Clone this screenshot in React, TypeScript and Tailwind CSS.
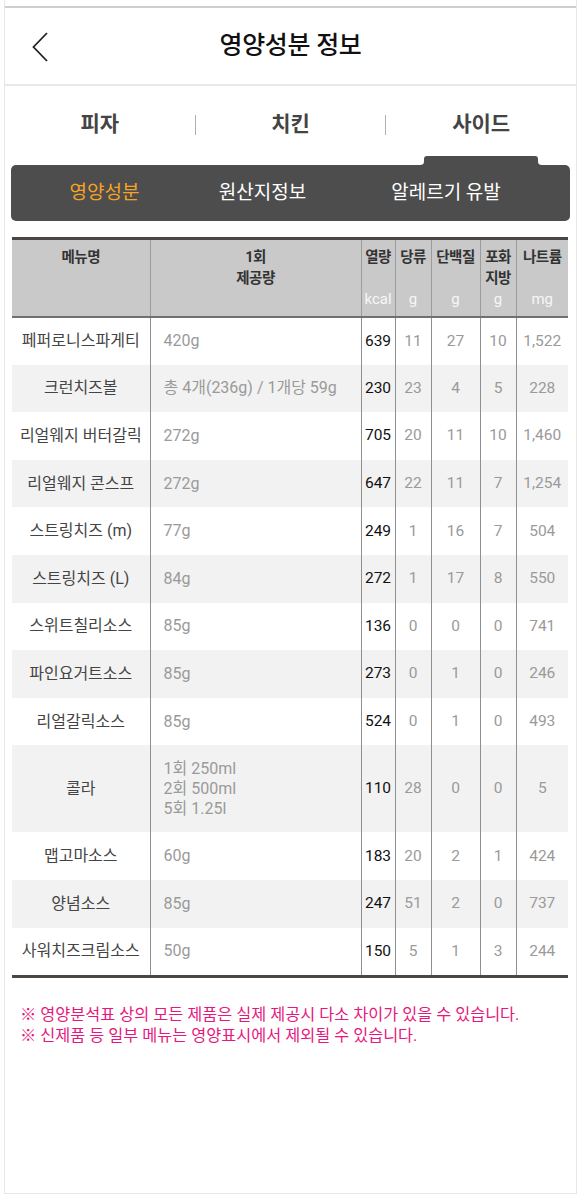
import React from 'react';

interface Row {
  name: string;
  serving: string[];
  kcal: string;
  sugar: string;
  protein: string;
  fat: string;
  sodium: string;
}

const rows: Row[] = [
  { name: '페퍼로니스파게티', serving: ['420g'], kcal: '639', sugar: '11', protein: '27', fat: '10', sodium: '1,522' },
  { name: '크런치즈볼', serving: ['총 4개(236g) / 1개당 59g'], kcal: '230', sugar: '23', protein: '4', fat: '5', sodium: '228' },
  { name: '리얼웨지 버터갈릭', serving: ['272g'], kcal: '705', sugar: '20', protein: '11', fat: '10', sodium: '1,460' },
  { name: '리얼웨지 콘스프', serving: ['272g'], kcal: '647', sugar: '22', protein: '11', fat: '7', sodium: '1,254' },
  { name: '스트링치즈 (m)', serving: ['77g'], kcal: '249', sugar: '1', protein: '16', fat: '7', sodium: '504' },
  { name: '스트링치즈 (L)', serving: ['84g'], kcal: '272', sugar: '1', protein: '17', fat: '8', sodium: '550' },
  { name: '스위트칠리소스', serving: ['85g'], kcal: '136', sugar: '0', protein: '0', fat: '0', sodium: '741' },
  { name: '파인요거트소스', serving: ['85g'], kcal: '273', sugar: '0', protein: '1', fat: '0', sodium: '246' },
  { name: '리얼갈릭소스', serving: ['85g'], kcal: '524', sugar: '0', protein: '1', fat: '0', sodium: '493' },
  { name: '콜라', serving: ['1회 250ml', '2회 500ml', '5회 1.25l'], kcal: '110', sugar: '28', protein: '0', fat: '0', sodium: '5' },
  { name: '맵고마소스', serving: ['60g'], kcal: '183', sugar: '20', protein: '2', fat: '1', sodium: '424' },
  { name: '양념소스', serving: ['85g'], kcal: '247', sugar: '51', protein: '2', fat: '0', sodium: '737' },
  { name: '사워치즈크림소스', serving: ['50g'], kcal: '150', sugar: '5', protein: '1', fat: '3', sodium: '244' },
];

const headers: { label: string[]; unit?: string }[] = [
  { label: ['메뉴명'] },
  { label: ['1회', '제공량'] },
  { label: ['열량'], unit: 'kcal' },
  { label: ['당류'], unit: 'g' },
  { label: ['단백질'], unit: 'g' },
  { label: ['포화', '지방'], unit: 'g' },
  { label: ['나트륨'], unit: 'mg' },
];

const BackIcon = () => (
  <svg width="16" height="30" viewBox="0 0 16 30" fill="none">
    <path d="M15 1 L1.5 15 L15 29" stroke="#222" strokeWidth="1.8" />
  </svg>
);

// little tab under the active category, flares into the dark bar
const TabNotch = () => (
  <svg width="124" height="9" viewBox="0 0 124 9" className="block">
    <path d="M0 9 C4 9 5 8 5 5 L5 3 Q5 0 8 0 L116 0 Q119 0 119 3 L119 5 C119 8 120 9 124 9 Z" fill="#4d4d4d" />
  </svg>
);

const cellBorder = 'border-r border-[#8f8f8f]';

export default function App() {
  return (
    <div className="w-[580px] min-h-[1196px] bg-white" style={{ fontFamily: "Roboto, 'Noto Sans CJK KR', sans-serif" }}>
      <div className="ml-[4px] w-[573px] h-[1194px] border-x border-b border-[#e6e6e6]">
        <div className="pt-[6px]">
          {/* header */}
          <div className="relative h-[80px] border-t-2 border-b-2 border-t-[#cfcfcf] border-b-[#e8e8e8] flex items-center justify-center">
            <button className="absolute left-[27px] top-[24px]">
              <BackIcon />
            </button>
            <h1 className="text-[25px] font-medium text-[#111] tracking-[-0.3px]">영양성분 정보</h1>
          </div>

          {/* category tabs */}
          <div className="flex items-start">
            <div className="flex-1 flex flex-col items-center">
              <div className="h-[70px] pt-2 flex items-center text-[21px] font-bold text-[#444]">피자</div>
              <div className="h-[9px]" />
            </div>
            <div className="w-px h-[20px] bg-[#b0b0b0] mt-[29px]" />
            <div className="flex-1 flex flex-col items-center">
              <div className="h-[70px] pt-2 flex items-center text-[21px] font-bold text-[#444]">치킨</div>
              <div className="h-[9px]" />
            </div>
            <div className="w-px h-[20px] bg-[#b0b0b0] mt-[29px]" />
            <div className="flex-1 flex flex-col items-center">
              <div className="h-[70px] pt-2 flex items-center text-[21px] font-bold text-[#444]">사이드</div>
              <TabNotch />
            </div>
          </div>

          {/* sub nav */}
          <div className="mx-[6px] h-[56px] rounded-[5px] bg-[#4d4d4d] flex items-center text-[19px]">
            <span className="ml-[23.5px] w-[140px] text-center text-[#f5a324]">영양성분</span>
            <span className="ml-[18px] w-[140px] text-center text-white">원산지정보</span>
            <span className="ml-[43.5px] w-[140px] text-center text-white">알레르기 유발</span>
          </div>

          {/* nutrition table */}
          <div className="mt-[16px] ml-[7px] w-[556px] border-y-[3px] border-[#4b4642]">
            <table className="w-full table-fixed border-collapse">
              <colgroup>
                <col className="w-[138px]" />
                <col className="w-[211px]" />
                <col className="w-[34px]" />
                <col className="w-[36px]" />
                <col className="w-[49px]" />
                <col className="w-[36px]" />
                <col className="w-[52px]" />
              </colgroup>
              <thead>
                <tr className="bg-[#c9c9c9]">
                  {headers.map((h, i) => (
                    <th
                      key={i}
                      className={`h-[77px] p-0 pt-[7px] align-top font-bold border-b-2 border-b-[#707070] ${i < headers.length - 1 ? 'border-r border-r-[#9c9c9c]' : ''}`}
                    >
                      <div className="h-[42px] text-[14.5px] leading-[21px] text-[#333] tracking-[-0.5px]">
                        {h.label.map((l) => (
                          <div key={l}>{l}</div>
                        ))}
                      </div>
                      <div className="h-[21px] text-[15px] leading-[21px] font-normal text-[#f7f7f7]">{h.unit}</div>
                    </th>
                  ))}
                </tr>
              </thead>
              <tbody>
                {rows.map((r, i) => {
                  const multi = r.serving.length > 1;
                  return (
                    <tr key={r.name} className={i % 2 === 1 ? 'bg-[#f2f2f2]' : 'bg-white'}>
                      <td className={`${multi ? 'h-[87px]' : 'h-[47.6px]'} p-0 text-center text-[16px] text-[#444] ${cellBorder}`}>
                        {r.name}
                      </td>
                      <td className={`p-0 pl-[13px] text-[16px] leading-[20px] text-[#9a9a9a] ${cellBorder}`}>
                        {r.serving.map((s) => (
                          <div key={s}>{s}</div>
                        ))}
                      </td>
                      <td className={`p-0 text-center text-[15.5px] text-[#111] ${cellBorder}`}>{r.kcal}</td>
                      <td className={`p-0 text-center text-[15.5px] text-[#9a9a9a] ${cellBorder}`}>{r.sugar}</td>
                      <td className={`p-0 text-center text-[15.5px] text-[#9a9a9a] ${cellBorder}`}>{r.protein}</td>
                      <td className={`p-0 text-center text-[15.5px] text-[#9a9a9a] ${cellBorder}`}>{r.fat}</td>
                      <td className="p-0 text-center text-[15.5px] text-[#9a9a9a]">{r.sodium}</td>
                    </tr>
                  );
                })}
              </tbody>
            </table>
          </div>

          {/* notes */}
          <div className="mt-[26px] pl-[15px] text-[16.3px] leading-[21px] text-[#e6187e]">
            <p>※ 영양분석표 상의 모든 제품은 실제 제공시 다소 차이가 있을 수 있습니다.</p>
            <p>※ 신제품 등 일부 메뉴는 영양표시에서 제외될 수 있습니다.</p>
          </div>
        </div>
      </div>
    </div>
  );
}
